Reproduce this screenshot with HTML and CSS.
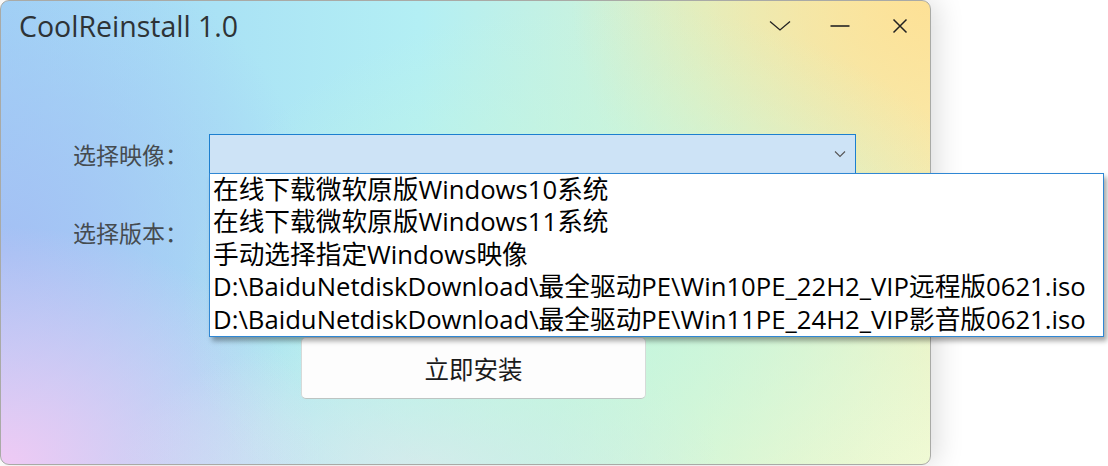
FILE: index.html
```html
<!DOCTYPE html>
<html lang="zh-CN">
<head>
<meta charset="utf-8">
<title>CoolReinstall 1.0</title>
<link rel="stylesheet" href="styles.css">
</head>
<body>
<div class="desk">
  <div class="window">
    <div class="titlebar">
      <div class="title">CoolReinstall 1.0</div>
      <div class="controls">
        <span class="ctl"><svg width="22" height="12" viewBox="0 0 22 12"><path d="M1 1.5 L11 10 L21 1.5" fill="none" stroke="#222" stroke-width="1.3"/></svg></span>
        <span class="ctl"><svg width="20" height="4" viewBox="0 0 20 4"><path d="M0.5 2 H19.5" fill="none" stroke="#222" stroke-width="1.6"/></svg></span>
        <span class="ctl"><svg width="16" height="16" viewBox="0 0 16 16"><path d="M1.5 1.5 L14.5 14.5 M14.5 1.5 L1.5 14.5" fill="none" stroke="#222" stroke-width="1.5"/></svg></span>
      </div>
    </div>
    <div class="form">
      <div class="row">
        <label class="lbl">选择映像：</label>
        <div class="combo open">
          <span class="arrow"><svg width="12" height="8" viewBox="0 0 12 8"><path d="M1 1.5 L6 6.5 L11 1.5" fill="none" stroke="#555" stroke-width="1.1"/></svg></span>
          <ul class="list">
            <li>在线下载微软原版Windows10系统</li>
            <li>在线下载微软原版Windows11系统</li>
            <li>手动选择指定Windows映像</li>
            <li>D:\BaiduNetdiskDownload\最全驱动PE\Win10PE_22H2_VIP远程版0621.iso</li>
            <li>D:\BaiduNetdiskDownload\最全驱动PE\Win11PE_24H2_VIP影音版0621.iso</li>
          </ul>
        </div>
      </div>
      <div class="row">
        <label class="lbl">选择版本：</label>
        <div class="combo"></div>
      </div>
      <div class="actions">
        <button class="btn">立即安装</button>
      </div>
    </div>
  </div>
</div>
</body>
</html>
```

FILE: styles.css
```css
* { box-sizing: border-box; }
html, body { margin: 0; padding: 0; background: #ffffff; }
body {
  width: 1108px;
  height: 466px;
  overflow: hidden;
  font-family: "Noto Sans CJK SC", "Noto Sans", sans-serif;
}
.desk { width: 1108px; height: 466px; }
.window {
  width: 931px;
  height: 465px;
  border: 1px solid #a9aaa6;
  border-radius: 9px;
  box-shadow: 6px 0 28px rgba(0,0,0,0.14);
  background:
    radial-gradient(ellipse 420px 300px at 600px 300px, rgba(196,246,222,0.95), rgba(196,246,222,0) 100%),
    radial-gradient(ellipse 360px 300px at 930px 0px, rgba(253,225,150,1), rgba(253,232,170,0) 100%),
    radial-gradient(ellipse 320px 240px at 0px 465px, rgba(240,202,244,1), rgba(240,202,244,0) 100%),
    radial-gradient(ellipse 300px 140px at 420px 465px, rgba(222,230,240,0.9), rgba(222,230,240,0) 100%),
    radial-gradient(ellipse 380px 260px at 930px 465px, rgba(242,250,212,1), rgba(242,250,212,0) 100%),
    radial-gradient(ellipse 320px 320px at 0px 250px, rgba(164,192,244,1), rgba(164,192,244,0) 100%),
    linear-gradient(90deg, #a0d4f6 0%, #b3eff4 45%, #d6f4d2 75%, #f6efb8 100%);
  position: relative;
}
.titlebar {
  height: 52px;
  display: flex;
  justify-content: space-between;
  align-items: flex-start;
}
.title {
  padding: 5px 0 0 18px;
  font-family: "Open Sans", "Noto Sans", sans-serif;
  font-size: 28.5px;
  line-height: 40px;
  color: #2e3336;
}
.controls {
  display: flex;
  padding: 16px 0 0 0;
}
.ctl {
  width: 60px;
  height: 18px;
  display: flex;
  align-items: center;
  justify-content: center;
}
.form {
  padding: 81px 0 0 72px;
}
.row {
  display: flex;
  align-items: center;
  height: 40px;
  margin-bottom: 38px;
}
.lbl {
  width: 136px;
  font-size: 23px;
  color: #454b50;
}
.combo {
  width: 647px;
  height: 40px;
  border: 1px solid #1c7fcf;
  position: relative;
}
.combo.open {
  background: #cde3f6;
}
.arrow {
  position: absolute;
  right: 9px;
  top: 15px;
  display: flex;
}
.list {
  position: absolute;
  left: -1px;
  top: 38px;
  width: 895px;
  margin: 0;
  padding: 0 0 0 3px;
  list-style: none;
  background: #ffffff;
  border: 1px solid #2f87d4;
  box-shadow: 3px 4px 5px rgba(0,0,0,0.35);
  z-index: 5;
}
.list li {
  font-size: 25.7px;
  line-height: 32.4px;
  color: #000;
  white-space: nowrap;
  font-family: "Open Sans", "Noto Sans CJK SC", sans-serif;
}
.actions {
  padding: 47px 0 0 228px;
}
.btn {
  display: block;
  width: 345px;
  height: 62px;
  background: #fdfdfd;
  border: 1px solid #d6dad8;
  border-bottom-color: #bdc4c2;
  border-radius: 5px;
  font-family: "Noto Sans CJK SC", sans-serif;
  font-size: 24.5px;
  color: #1b1b1b;
  padding: 0;
}
```
